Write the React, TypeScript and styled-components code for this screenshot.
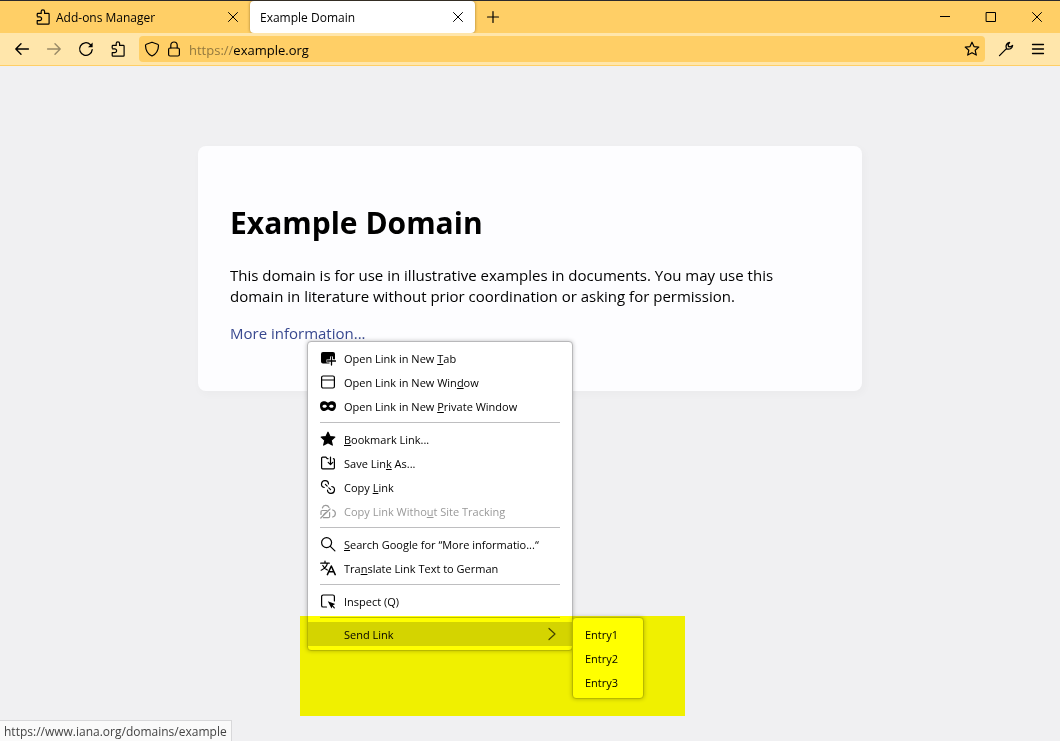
import React from 'react';
import styled, { createGlobalStyle, css } from 'styled-components';

const GlobalStyle = createGlobalStyle`
  *, *::before, *::after { box-sizing: border-box; }
  body {
    margin: 0;
    background: #f0f0f2;
    color: #000;
    font-family: 'Open Sans', 'Noto Sans', sans-serif;
    font-size: 12px;
  }
  button, input { font: inherit; color: inherit; }
`;

const Window = styled.div`
  min-height: 100vh;
  display: flex;
  flex-direction: column;
  border-top: 1px solid #2b2a2d;
`;

const TabBar = styled.header`
  display: flex;
  height: 32px;
  padding-left: 25px;
  background: #ffcf66;
`;

const Tab = styled.div<{ $active?: boolean }>`
  display: flex;
  align-items: center;
  gap: 5px;
  width: 225px;
  padding: 0 9px 0 10px;
  border-radius: 4px;
  ${(p) =>
    p.$active &&
    css`
      background: #fff;
      box-shadow: 0 0 3px rgba(90, 60, 0, 0.6);
    `}
`;

const TabTitle = styled.span`
  flex: 1;
  padding-top: 2px;
  line-height: 16px;
  white-space: nowrap;
`;

const IconButton = styled.button<{ $width?: number; $faded?: boolean }>`
  display: flex;
  flex: none;
  align-items: center;
  justify-content: center;
  width: ${(p) => p.$width ?? 32}px;
  padding: 0;
  border: 0;
  background: transparent;
  opacity: ${(p) => (p.$faded ? 0.4 : 1)};
`;

const WindowControls = styled.div`
  display: flex;
  margin-left: auto;
`;

const Toolbar = styled.nav`
  display: flex;
  height: 33px;
  padding: 0 6px;
  background: #ffe6ab;
  border-bottom: 1px solid #ffcf66;
`;

const AddressBar = styled.div`
  display: flex;
  flex: 1;
  align-items: center;
  margin: 3px 5px;
  padding: 0 5px;
  border-radius: 4px;
  background: #ffcf66;
`;

const AddressLabel = styled.label`
  padding: 2px 0 0 7px;
  color: #92783f;
  font-size: 13px;
  line-height: 18px;
`;

const AddressInput = styled.input`
  flex: 1;
  min-width: 0;
  padding: 2px 0 0;
  border: 0;
  outline: 0;
  background: transparent;
  font-size: 13px;
  line-height: 18px;
`;

const Page = styled.main`
  flex: 1;
  padding: 80px 16px;
`;

const Card = styled.article`
  max-width: 664px;
  margin: 0 auto;
  padding: 32px;
  border-radius: 8px;
  background: #fdfdff;
  box-shadow: 2px 3px 7px 2px rgba(0, 0, 0, 0.02);
  font-size: 15px;
  line-height: 21px;
`;

const Title = styled.h1`
  margin: 22px 0 20px;
  font-size: 30px;
  line-height: 45px;
`;

const Paragraph = styled.p`
  margin: 16px 0;
`;

const LinkAnchor = styled.div`
  position: relative;
  margin: 16px 0 15px;
`;

const PageLink = styled.a`
  color: #38488f;
  text-decoration: none;
`;

const menuSurface = css`
  position: absolute;
  padding: 4px 0;
  border: 1px solid #b8b8ba;
  border-radius: 4px;
  background: #fff;
  box-shadow: 0 0 4px rgba(0, 0, 0, 0.25);
  font-size: 11px;
  line-height: 16px;
`;

const ContextMenu = styled.div`
  ${menuSurface}
  top: 18px;
  left: 77px;
  width: 266px;
`;

const Submenu = styled.div`
  ${menuSurface}
  bottom: -49px;
  left: 264px;
  width: 72px;
`;

const MenuItem = styled.button<{ $selected?: boolean }>`
  display: flex;
  align-items: center;
  gap: 8px;
  width: 100%;
  height: 24px;
  padding: 0 12px;
  border: 0;
  background: ${(p) => (p.$selected ? '#d4d4d4' : 'transparent')};
  text-align: left;
  white-space: nowrap;
  &:disabled { color: #999; }
`;

const MenuLabel = styled.span`
  flex: 1;
  padding-top: 2px;
`;

const AccessKey = styled.u`
  text-underline-offset: 1px;
  text-decoration-skip-ink: none;
`;

const Separator = styled.hr`
  height: 1px;
  margin: 4px 12px;
  border: 0;
  background: #bebec0;
`;

const Marker = styled.div`
  position: absolute;
  top: 293px;
  left: 70px;
  width: 385px;
  height: 100px;
  background: #ff0;
  mix-blend-mode: multiply;
  pointer-events: none;
`;

const StatusPanel = styled.footer`
  align-self: flex-start;
  height: 21px;
  padding: 2px 4px 0;
  border: 1px solid #d8d8da;
  border-width: 1px 1px 0 0;
  background: #fafafa;
  color: #444;
  line-height: 18px;
`;

const Glyph = styled.svg`
  display: block;
  flex: none;
  width: 16px;
  height: 16px;
  fill: none;
  stroke: currentColor;
  stroke-width: 1.2;
  stroke-linecap: round;
  stroke-linejoin: round;
`;

const AddressGlyph = styled(Glyph)`
  margin-right: 6px;
`;

const STAR =
  'M8 1.2l2 4.4 4.8.5-3.6 3.2 1.1 4.8L8 11.7l-4.3 2.4 1.1-4.8L1.2 6.1l4.8-.5z';

const icons = {
  puzzle: (
    <path d="M2.2 7V5.2a.8.8 0 0 1 .8-.8h3.2V2.6a1.7 1.7 0 0 1 3.4 0v1.8h3.7a.8.8 0 0 1 .8.8v9.2a.8.8 0 0 1-.8.8H3a.8.8 0 0 1-.8-.8v-2.7h2.5a1.9 1.9 0 0 0 0-3.8H2.7" />
  ),
  close: <path d="M3.5 3.5l9 9M12.5 3.5l-9 9" strokeWidth="1" />,
  plus: <path d="M8 2.5v11M2.5 8h11" />,
  minimize: <path d="M3 7.5h10" strokeWidth="1" strokeLinecap="butt" />,
  maximize: <path d="M3.5 3.5h9v9h-9z" strokeWidth="1" strokeLinejoin="miter" />,
  windowClose: <path d="M3.5 3.5l9 9M12.5 3.5l-9 9" strokeWidth="1" />,
  back: <path d="M14.4 8H1.8M7 2.8L1.8 8 7 13.2" strokeWidth="1.4" />,
  forward: <path d="M1.6 8h12.6M9 2.8L14.2 8 9 13.2" strokeWidth="1.4" />,
  reload: (
    <>
      <path d="M14.2 8.6A6.3 6.3 0 1 1 12.2 3.4L13 4.2" strokeWidth="1.3" />
      <path d="M14.6 1.6v4.6H10z" fill="currentColor" stroke="none" />
    </>
  ),
  shield: (
    <path d="M8 1.2l5.6 2c.6.2.9.6.9 1.2C14.4 9.6 12 13 8 15 4 13 1.6 9.6 1.5 4.4c0-.6.3-1 .9-1.2z" />
  ),
  lock: (
    <>
      <rect x="2.6" y="7" width="10.8" height="8" rx="1.5" />
      <path d="M4.8 7V4.2a3.2 3.2 0 0 1 6.4 0V7" />
    </>
  ),
  star: <path d={STAR} />,
  starFilled: <path d={STAR} fill="currentColor" />,
  wrench: (
    <path
      d="M1.5 14.6l6.2-6.2M11.6 1.5C8.9 1.7 7.4 4.4 8.3 7c.3.9-.2 1.3-.6 1.4.4-.3 1-.6 1.6-.4 2.8.7 5-.9 5.3-3.5l-2.2 1.3-1.9-.3-.4-1.9z"
      strokeWidth="1.3"
    />
  ),
  burger: <path d="M2.5 3.5h11M2.5 8h11M2.5 12.5h11" strokeWidth="1.3" />,
  newTab: (
    <>
      <path
        d="M3 2h10a2 2 0 0 1 2 2v5.5H9.500V13.500H3a2 2 0 0 1-2-2V4a2 2 0 0 1 2-2z"
        fill="currentColor"
        stroke="none"
      />
      <path d="M11.5 6.5v5M6.500 11h8" stroke="#fff" strokeWidth="3" strokeLinecap="butt" />
      <path d="M11.500 7v8M7.500 11h8" strokeWidth="1.3" />
    </>
  ),
  newWindow: (
    <>
      <rect x="1.6" y="2" width="12.8" height="12" rx="1.5" />
      <path d="M1.6 6h12.8" />
    </>
  ),
  mask: (
    <path
      d="M8 4.8C6.800 3.500 5 3 3.200 3.200 1.200 3.400 0 5 0 7.400 0 10.500 1.700 13 4.300 13c1.800 0 2.600-1.600 3.700-1.600s1.900 1.600 3.700 1.600C14.300 13 16 10.500 16 7.400c0-2.400-1.200-4-3.200-4.200C11 3 9.200 3.500 8 4.800zM4.600 9.800c-1.100 0-1.900-.7-2.200-1.600.5-.9 1.300-1.400 2.300-1.400 1.100 0 1.900.7 2.300 1.500-.5.900-1.300 1.500-2.400 1.500zm6.800 0c-1.100 0-1.900-.6-2.400-1.500.4-.8 1.200-1.500 2.300-1.500 1 0 1.800.5 2.300 1.400-.3.900-1.100 1.600-2.200 1.600z"
      fill="currentColor"
      fillRule="evenodd"
      stroke="none"
    />
  ),
  save: (
    <>
      <path d="M8 3.700h-.8L5.900 2.200H2.600a1 1 0 0 0-1 1v9.600a1 1 0 0 0 1 1h10.800a1 1 0 0 0 1-1V4.700a1 1 0 0 0-1-1" />
      <path d="M10.500 2v7.400M8.200 7.300l2.300 2.300 2.300-2.300" />
    </>
  ),
  link: (
    <>
      <path d="M4.200 8.500A3.500 3.500 0 1 1 8.500 5M5.400 5.400l1.800 1.800" />
      <path d="M11.800 7.500A3.500 3.500 0 1 1 7.500 11M8.800 8.800l1.800 1.800" />
    </>
  ),
  linkClean: (
    <>
      <path d="M2.400 5A3.500 3.500 0 0 1 9 4.500M12.600 7a3.600 3.600 0 0 1 0 7" />
      <path d="M9.600 9.500v4a1.200 1.200 0 0 1-1.200 1.200H3.500M1 11.500V8.700a1.200 1.200 0 0 1 1.200-1.200h4.600M.8 15L10 6M3.800 11.500l2.200-2" />
    </>
  ),
  search: (
    <>
      <circle cx="6.6" cy="6.600" r="5" />
      <path d="M10.300 10.300l4.600 4.600" />
    </>
  ),
  translate: (
    <>
      <path d="M.7 3.200h8.600M5 1v2.200M7.500 3.200C6.800 6 4.500 8.800 1.200 10.200M2.800 5.500c1 2 2.700 3.600 4.600 4.500" />
      <path d="M7.400 14.600L11.300 6l3.900 8.600M8.800 11.800h5" strokeWidth="1.5" />
    </>
  ),
  inspect: (
    <>
      <path d="M6.500 14H3.200a1.600 1.600 0 0 1-1.600-1.600V3.600A1.600 1.600 0 0 1 3.200 2h9.600a1.600 1.600 0 0 1 1.600 1.600V8" />
      <path d="M7.800 8.200l7.400 2.800-2.500 1.500-1.200 3z" fill="currentColor" stroke="none" />
      <path d="M12 12.400l2.300 2.400" />
    </>
  ),
  chevron: <path d="M5 2.500l6 5.500-6 5.500" stroke="#444" />,
};

type IconName = keyof typeof icons;

const Icon = ({ name }: { name: IconName }) => (
  <Glyph viewBox="0 0 16 16" aria-hidden="true">
    {icons[name]}
  </Glyph>
);

interface Entry {
  icon: IconName;
  before?: string;
  accessKey?: string;
  after?: string;
  disabled?: boolean;
}

const groups: Entry[][] = [
  [
    { icon: 'newTab', before: 'Open Link in New ', accessKey: 'T', after: 'ab' },
    { icon: 'newWindow', before: 'Open Link in New Win', accessKey: 'd', after: 'ow' },
    { icon: 'mask', before: 'Open Link in New ', accessKey: 'P', after: 'rivate Window' },
  ],
  [
    { icon: 'starFilled', accessKey: 'B', after: 'ookmark Link...' },
    { icon: 'save', before: 'Save Lin', accessKey: 'k', after: ' As...' },
    { icon: 'link', before: 'Copy ', accessKey: 'L', after: 'ink' },
    { icon: 'linkClean', before: 'Copy Link Witho', accessKey: 'u', after: 't Site Tracking', disabled: true },
  ],
  [
    { icon: 'search', accessKey: 'S', after: 'earch Google for “More informatio...“' },
    { icon: 'translate', before: 'Tra', accessKey: 'n', after: 'slate Link Text to German' },
  ],
  [{ icon: 'inspect', before: 'Inspect (Q)' }],
];

const IconSpace = styled.span`
  width: 16px;
`;

export default function App() {
  return (
    <>
      <GlobalStyle />
      <Window>
        <TabBar>
          <Tab>
            <Icon name="puzzle" />
            <TabTitle>Add-ons Manager</TabTitle>
            <IconButton $width={16} aria-label="Close tab"><Icon name="close" /></IconButton>
          </Tab>
          <Tab $active>
            <TabTitle>Example Domain</TabTitle>
            <IconButton $width={16} aria-label="Close tab"><Icon name="close" /></IconButton>
          </Tab>
          <IconButton $width={36} aria-label="New tab"><Icon name="plus" /></IconButton>
          <WindowControls>
            <IconButton $width={46} aria-label="Minimize"><Icon name="minimize" /></IconButton>
            <IconButton $width={46} aria-label="Maximize"><Icon name="maximize" /></IconButton>
            <IconButton $width={46} aria-label="Close window"><Icon name="windowClose" /></IconButton>
          </WindowControls>
        </TabBar>
        <Toolbar>
          <IconButton aria-label="Back"><Icon name="back" /></IconButton>
          <IconButton aria-label="Forward" $faded disabled><Icon name="forward" /></IconButton>
          <IconButton aria-label="Reload"><Icon name="reload" /></IconButton>
          <IconButton aria-label="Extensions"><Icon name="puzzle" /></IconButton>
          <AddressBar>
            <AddressGlyph viewBox="0 0 16 16" aria-hidden="true">{icons.shield}</AddressGlyph>
            <Icon name="lock" />
            <AddressLabel htmlFor="address">https://</AddressLabel>
            <AddressInput id="address" defaultValue="example.org" />
            <IconButton $width={16} aria-label="Bookmark this page"><Icon name="star" /></IconButton>
          </AddressBar>
          <IconButton aria-label="Tools"><Icon name="wrench" /></IconButton>
          <IconButton aria-label="Application menu"><Icon name="burger" /></IconButton>
        </Toolbar>
        <Page>
          <Card>
            <Title>Example Domain</Title>
            <Paragraph>
              This domain is for use in illustrative examples in documents. You may use this
              domain in literature without prior coordination or asking for permission.
            </Paragraph>
            <LinkAnchor>
              <PageLink href="#more">More information...</PageLink>
              <ContextMenu role="menu">
                {groups.map((group, index) => (
                  <React.Fragment key={index}>
                    {group.map((entry) => (
                      <MenuItem key={entry.icon} role="menuitem" disabled={entry.disabled}>
                        <Icon name={entry.icon} />
                        <MenuLabel>
                          {entry.before}
                          {entry.accessKey && <AccessKey>{entry.accessKey}</AccessKey>}
                          {entry.after}
                        </MenuLabel>
                      </MenuItem>
                    ))}
                    <Separator />
                  </React.Fragment>
                ))}
                <MenuItem role="menuitem" aria-haspopup="menu" $selected>
                  <IconSpace />
                  <MenuLabel>Send Link</MenuLabel>
                  <Icon name="chevron" />
                </MenuItem>
                <Submenu role="menu">
                  {['Entry1', 'Entry2', 'Entry3'].map((label) => (
                    <MenuItem key={label} role="menuitem">
                      <MenuLabel>{label}</MenuLabel>
                    </MenuItem>
                  ))}
                </Submenu>
              </ContextMenu>
              <Marker />
            </LinkAnchor>
          </Card>
        </Page>
        <StatusPanel>https://www.iana.org/domains/example</StatusPanel>
      </Window>
    </>
  );
}
